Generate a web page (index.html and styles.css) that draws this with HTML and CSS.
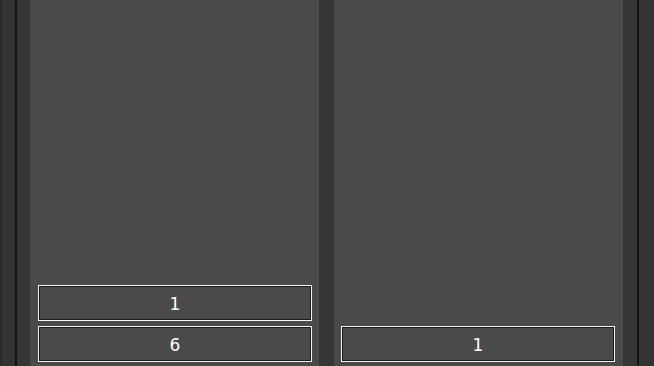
FILE: index.html
```html
<!DOCTYPE html>
<html>
<head>
<meta charset="utf-8">
<link rel="stylesheet" href="styles.css">
</head>
<body>
<div class="frame">
  <div class="edge edge-left"></div>
  <div class="rule"></div>
  <div class="gutter gutter-a"></div>
  <div class="panel panel-left">
    <div class="cell">1</div>
    <div class="cell">6</div>
  </div>
  <div class="gutter gutter-b"></div>
  <div class="panel panel-right">
    <div class="cell">1</div>
  </div>
  <div class="gutter gutter-c"></div>
  <div class="rule"></div>
  <div class="edge edge-right"></div>
</div>
</body>
</html>
```
FILE: styles.css
```css
html, body {
  margin: 0;
  padding: 0;
  background: #333333;
  overflow: hidden;
}
.frame {
  display: flex;
  height: 366px;
  width: 654px;
}
.edge {
  width: 15px;
  background: #333333;
  box-sizing: border-box;
}
.edge-left {
  border-left: 2px solid #2c2c2c;
}
.rule {
  width: 2px;
  background: #141414;
}
.gutter {
  background: #363636;
}
.gutter-a { width: 13px; }
.gutter-b { width: 15px; }
.gutter-c { width: 14px; }
.panel {
  width: 289px;
  background: #4a4a4a;
  box-sizing: border-box;
  display: flex;
  flex-direction: column;
  justify-content: flex-end;
  gap: 5px;
  padding-bottom: 4px;
}
.panel-left { padding-left: 8px; }
.panel-right { padding-left: 7px; }
.cell {
  width: 274px;
  height: 36px;
  box-sizing: border-box;
  border: 1px solid #f2f2f2;
  box-shadow: inset 0 0 0 1px #1c1c1c;
  color: #ffffff;
  font-family: "DejaVu Sans", sans-serif;
  font-size: 17px;
  line-height: 34px;
  text-align: center;
  padding-top: 1px;
}
```
